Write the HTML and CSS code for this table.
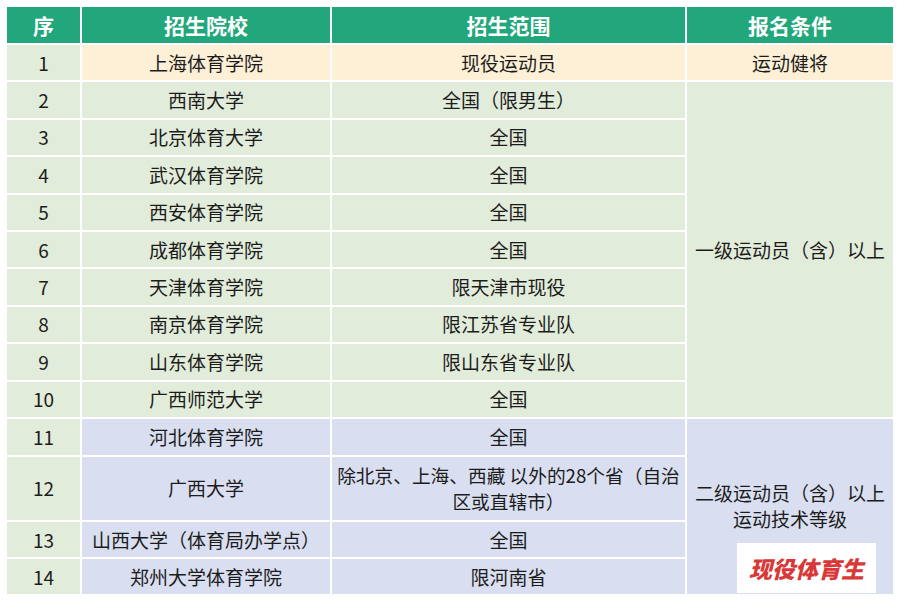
FILE: index.html
```html
<!DOCTYPE html>
<html lang="zh">
<head>
<meta charset="utf-8">
<link rel="stylesheet" href="styles.css">
</head>
<body>
<div class="wrap">
<table class="tbl">
  <colgroup>
    <col class="c1"><col class="c2"><col class="c3"><col class="c4">
  </colgroup>
  <thead>
    <tr class="head"><th>序</th><th>招生院校</th><th>招生范围</th><th>报名条件</th></tr>
  </thead>
  <tbody>
    <tr class="r"><td class="g">1</td><td class="o">上海体育学院</td><td class="o">现役运动员</td><td class="o">运动健将</td></tr>
    <tr class="r"><td class="g">2</td><td class="g">西南大学</td><td class="g">全国（限男生）</td><td class="g" rowspan="9">一级运动员（含）以上</td></tr>
    <tr class="r"><td class="g">3</td><td class="g">北京体育大学</td><td class="g">全国</td></tr>
    <tr class="r"><td class="g">4</td><td class="g">武汉体育学院</td><td class="g">全国</td></tr>
    <tr class="r"><td class="g">5</td><td class="g">西安体育学院</td><td class="g">全国</td></tr>
    <tr class="r"><td class="g">6</td><td class="g">成都体育学院</td><td class="g">全国</td></tr>
    <tr class="r"><td class="g">7</td><td class="g">天津体育学院</td><td class="g">限天津市现役</td></tr>
    <tr class="r"><td class="g">8</td><td class="g">南京体育学院</td><td class="g">限江苏省专业队</td></tr>
    <tr class="r"><td class="g">9</td><td class="g">山东体育学院</td><td class="g">限山东省专业队</td></tr>
    <tr class="r"><td class="g">10</td><td class="g">广西师范大学</td><td class="g">全国</td></tr>
    <tr class="r11"><td class="g">11</td><td class="b">河北体育学院</td><td class="b">全国</td><td class="b multi" rowspan="4">二级运动员（含）以上<br>运动技术等级</td></tr>
    <tr class="r12"><td class="g">12</td><td class="b">广西大学</td><td class="b multi narrow">除北京、上海、西藏 以外的28个省（自治<br>区或直辖市）</td></tr>
    <tr class="r13"><td class="g">13</td><td class="b">山西大学（体育局办学点）</td><td class="b">全国</td></tr>
    <tr class="r14"><td class="g">14</td><td class="b">郑州大学体育学院</td><td class="b">限河南省</td></tr>
  </tbody>
</table>
<div class="mark">现役体育生</div>
</div>
</body>
</html>
```
FILE: styles.css
```css
html, body {
  margin: 0;
  padding: 0;
  background: #ffffff;
}
body {
  font-family: "Noto Sans CJK SC", "Noto Sans", sans-serif;
  color: #1c1c1c;
}
.wrap {
  position: relative;
  width: 900px;
  height: 601px;
}
.tbl {
  position: relative;
  top: 5px;
  left: 5px;
  border-collapse: separate;
  border-spacing: 2px;
  table-layout: fixed;
  width: 890px;
  background: #ffffff;
}
.c1 { width: 73px; }
.c2 { width: 248px; }
.c3 { width: 353px; }
.c4 { width: 206px; }
th, td {
  padding: 0;
  text-align: center;
  vertical-align: middle;
  font-size: 19px;
  line-height: 24px;
  white-space: nowrap;
}
.head th {
  height: 36px;
  background: #22a67b;
  color: #ffffff;
  font-size: 21px;
  font-weight: 700;
}
.r td { height: 35.4px; }
.r11 td { height: 36px; }
.r12 td { height: 63px; }
.r13 td { height: 35.5px; }
.r14 td { height: 34.5px; }
.g { background: #e2ecda; }
.o { background: #fdf0d6; }
.b { background: #d9dff0; }
.multi { line-height: 26px; }
.narrow { font-size: 18.7px; }
.mark {
  position: absolute;
  left: 737px;
  top: 543px;
  width: 139px;
  height: 50px;
  background: #ffffff;
  color: #d93838;
  font-size: 23px;
  font-weight: 900;
  font-style: italic;
  text-align: center;
  line-height: 50px;
}
```
